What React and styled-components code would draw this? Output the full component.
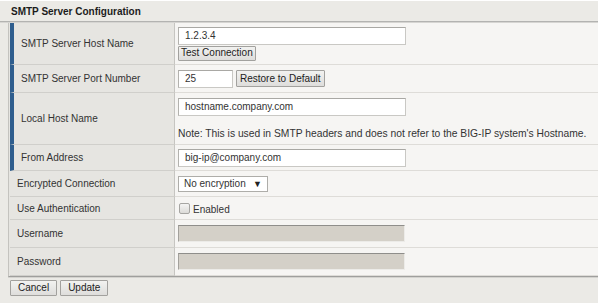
import styled, { createGlobalStyle } from "styled-components";

const GlobalStyle = createGlobalStyle`
  body {
    margin: 0;
    background: #ffffff;
    font-family: "Liberation Sans", Arial, sans-serif;
    font-size: 10px;
    color: #333333;
  }
`;

const Panel = styled.div`
  width: 598px;
  margin-top: 1px;
  background: #ebeae6;
  padding-bottom: 2px;
`;

const Title = styled.div`
  height: 20px;
  line-height: 21px;
  padding-left: 11px;
  font-weight: bold;
  color: #1c1c1c;
  border-bottom: 1px solid #b3b3b1;
  box-shadow: 0 1px 0 #d6d5d2;
`;

const Table = styled.div`
  margin: 1px 0 0 8px;
  border-left: 1px solid #c4c3bf;
  border-bottom: 1px solid #9f9f9d;
  box-shadow: 0 1px 0 #d4d3cf;
  background: #e6e5e1;
`;

const Row = styled.div`
  display: flex;
  height: ${(p) => p.h}px;
`;

const Label = styled.div`
  box-sizing: border-box;
  width: 165px;
  margin-left: 1px;
  display: flex;
  align-items: center;
  padding-left: 7px;
  border-left: ${(p) => (p.required ? "4px solid #2f5e8e" : "0")};
  border-right: 1px solid #c6c5c1;
  border-bottom: 1px solid #d0cfcb;
  background: #e6e5e1;
  color: #333333;
`;

const Value = styled.div`
  flex: 1;
  display: flex;
  flex-direction: column;
  justify-content: center;
  align-items: flex-start;
  gap: ${(p) => p.gap || 0}px;
  padding-left: 3px;
  background: #f6f5f3;
  border-bottom: 1px solid #dedcd8;
`;

const Inline = styled.div`
  display: flex;
  align-items: center;
  gap: ${(p) => p.gap || 3}px;
`;

const TextInput = styled.input`
  box-sizing: border-box;
  width: ${(p) => p.w}px;
  height: 18px;
  margin: 0;
  padding: 0 0 0 6px;
  font: inherit;
  color: #333333;
  background: #ffffff;
  border: 1px solid #c9c8c4;
  border-top-color: #a9a8a4;
  border-left-color: #b3b2ae;
  outline: none;
`;

const DisabledInput = styled.div`
  box-sizing: border-box;
  width: 227px;
  height: 17px;
  background: #d4d0c8;
  border-top: 1px solid #8f8e8b;
  border-left: 1px solid #a3a19c;
  border-right: 1px solid #ecebe8;
  border-bottom: 1px solid #ecebe8;
`;

const Button = styled.button`
  box-sizing: border-box;
  height: ${(p) => p.h || 16}px;
  margin: 0;
  padding: 0 ${(p) => p.px || 2}px;
  font: inherit;
  color: #222222;
  background: linear-gradient(#f2f2f0, #dedddb);
  border: 1px solid #a2a19e;
  border-radius: 1px;
  line-height: 1;
`;

const Select = styled.div`
  box-sizing: border-box;
  width: 90px;
  height: 16px;
  display: flex;
  align-items: center;
  justify-content: space-between;
  padding: 0 5px 0 5px;
  background: #ffffff;
  border: 1px solid #aeada9;
  color: #333333;
`;

const Arrow = styled.span`
  font-size: 9px;
  color: #222222;
`;

const Check = styled.span`
  box-sizing: border-box;
  width: 11px;
  height: 11px;
  margin: 1px 0 0 1px;
  border: 1px solid #a6a5a2;
  border-radius: 2px;
  background: linear-gradient(#f4f4f3, #dcdbd8);
`;

const CheckText = styled.span`
  padding-top: 2px;
`;

const Note = styled.div`
  line-height: 12px;
  font-size: 10.3px;
`;

const Footer = styled.div`
  display: flex;
  gap: 3px;
  padding: 3px 0 5px 10px;
`;

export default function App() {
  return (
    <>
      <GlobalStyle />
      <Panel>
        <Title>SMTP Server Configuration</Title>
        <Table>
          <Row h={42}>
            <Label required>SMTP Server Host Name</Label>
            <Value gap={1}>
              <TextInput w={228} defaultValue="1.2.3.4" />
              <Button h={15} px={2}>Test Connection</Button>
            </Value>
          </Row>
          <Row h={28}>
            <Label required>SMTP Server Port Number</Label>
            <Value>
              <Inline gap={3}>
                <TextInput w={55} defaultValue="25" />
                <Button h={17} px={3}>Restore to Default</Button>
              </Inline>
            </Value>
          </Row>
          <Row h={52}>
            <Label required>Local Host Name</Label>
            <Value gap={12}>
              <TextInput w={228} defaultValue="hostname.company.com" />
              <Note>
                Note: This is used in SMTP headers and does not refer to the BIG-IP system's Hostname.
              </Note>
            </Value>
          </Row>
          <Row h={26}>
            <Label required>From Address</Label>
            <Value>
              <TextInput w={228} defaultValue="big-ip@company.com" />
            </Value>
          </Row>
          <Row h={26}>
            <Label>Encrypted Connection</Label>
            <Value>
              <Select>
                No encryption <Arrow>▼</Arrow>
              </Select>
            </Value>
          </Row>
          <Row h={23}>
            <Label>Use Authentication</Label>
            <Value>
              <Inline gap={3}>
                <Check />
                <CheckText>Enabled</CheckText>
              </Inline>
            </Value>
          </Row>
          <Row h={28}>
            <Label>Username</Label>
            <Value>
              <DisabledInput />
            </Value>
          </Row>
          <Row h={28}>
            <Label>Password</Label>
            <Value>
              <DisabledInput />
            </Value>
          </Row>
        </Table>
        <Footer>
          <Button h={16} px={7}>Cancel</Button>
          <Button h={16} px={7}>Update</Button>
        </Footer>
      </Panel>
    </>
  );
}
